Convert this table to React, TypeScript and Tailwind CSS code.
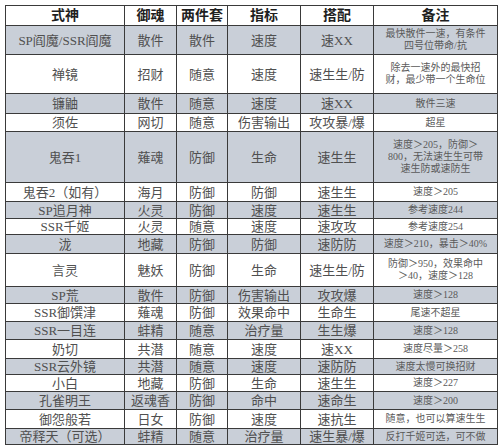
import React from "react";

type Row = { h: string; bg: boolean; c: string[]; n: string[] };

const rows: Row[] = [
  { h: "h-[29px]", bg: true, c: ["SP阎魔/SSR阎魔", "散件", "散件", "速度", "速XX"], n: ["最快散件一速，有条件", "四号位带命/抗"] },
  { h: "h-[39px]", bg: false, c: ["禅镜", "招财", "随意", "速度", "速生生/防"], n: ["除去一速外的最快招", "财，最少带一个生命位"] },
  { h: "h-[20px]", bg: true, c: ["镰鼬", "散件", "随意", "速度", "速XX"], n: ["散件三速"] },
  { h: "h-[18px]", bg: false, c: ["须佐", "网切", "随意", "伤害输出", "攻攻暴/爆"], n: ["超星"] },
  { h: "h-[51px]", bg: true, c: ["鬼吞1", "薙魂", "防御", "生命", "速生生"], n: ["速度＞205，防御＞", "800，无法速生生可带", "速生防或速防生"] },
  { h: "h-[19px]", bg: false, c: ["鬼吞2（如有）", "海月", "防御", "防御", "速生生"], n: ["速度＞205"] },
  { h: "h-[17px]", bg: true, c: ["SP追月神", "火灵", "防御", "速度", "速生生"], n: ["参考速度244"] },
  { h: "h-[16px]", bg: false, c: ["SSR千姬", "火灵", "随意", "速度", "速攻攻"], n: ["参考速度254"] },
  { h: "h-[19px]", bg: true, c: ["泷", "地藏", "防御", "防御", "速防防"], n: ["速度＞210，暴击＞40%"] },
  { h: "h-[33px]", bg: false, c: ["言灵", "魅妖", "防御", "生命", "速生生/防"], n: ["防御＞950，效果命中", "＞40，速度＞128"] },
  { h: "h-[17px]", bg: true, c: ["SP荒", "散件", "防御", "伤害输出", "攻攻爆"], n: ["速度＞128"] },
  { h: "h-[18px]", bg: false, c: ["SSR御馔津", "薙魂", "防御", "效果命中", "生命生"], n: ["尾速不超星"] },
  { h: "h-[18px]", bg: true, c: ["SSR一目连", "蚌精", "随意", "治疗量", "生生爆"], n: ["速度＞128"] },
  { h: "h-[19px]", bg: false, c: ["奶切", "共潜", "随意", "速度", "速XX"], n: ["速度尽量＞258"] },
  { h: "h-[16px]", bg: true, c: ["SSR云外镜", "共潜", "随意", "速度", "速防防"], n: ["速度太慢可换招财"] },
  { h: "h-[17px]", bg: false, c: ["小白", "地藏", "防御", "生命", "速生生"], n: ["速度＞227"] },
  { h: "h-[18px]", bg: true, c: ["孔雀明王", "返魂香", "防御", "命中", "速命生"], n: ["速度＞200"] },
  { h: "h-[19px]", bg: false, c: ["御怨般若", "日女", "防御", "速度", "速抗生"], n: ["随意，也可以算速生生"] },
  { h: "h-[16px]", bg: true, c: ["帝释天（可选）", "蚌精", "随意", "治疗量", "速生暴/爆"], n: ["反打千姬可选，可不做"] },
];

const headers = ["式神", "御魂", "两件套", "指标", "搭配", "备注"];

export default function App() {
  return (
    <div
      className="w-[500px] h-[445px] overflow-hidden bg-white pt-[5px] pl-[5px]"
      style={{ fontFamily: '"Liberation Serif", "Noto Sans CJK SC", serif' }}
    >
      <table className="table-fixed border-collapse w-[492px] text-[#505050]">
        <colgroup>
          <col className="w-[119px]" />
          <col className="w-[52px]" />
          <col className="w-[51px]" />
          <col className="w-[73px]" />
          <col className="w-[73px]" />
          <col className="w-[124px]" />
        </colgroup>
        <thead>
          <tr className="h-[20px] bg-white">
            {headers.map((h) => (
              <th
                key={h}
                className="border border-[#3a3a3a] p-0 text-center text-[14px] leading-[18px] font-bold text-[#1f1f1f]"
              >
                {h}
              </th>
            ))}
          </tr>
        </thead>
        <tbody>
          {rows.map((r, i) => (
            <tr key={i} className={`${r.h} ${r.bg ? "bg-[#c9cfd8]" : "bg-white"}`}>
              {r.c.map((t, j) => (
                <td
                  key={j}
                  className="border border-[#3a3a3a] p-0 text-center text-[13px] leading-[15px] whitespace-nowrap overflow-hidden"
                >
                  {t}
                </td>
              ))}
              <td className="border border-[#3a3a3a] p-0 text-center text-[10px] leading-[12px] text-[#5a5a5a] whitespace-nowrap overflow-hidden">
                {r.n.map((l, k) => (
                  <div key={k}>{l}</div>
                ))}
              </td>
            </tr>
          ))}
        </tbody>
      </table>
    </div>
  );
}
